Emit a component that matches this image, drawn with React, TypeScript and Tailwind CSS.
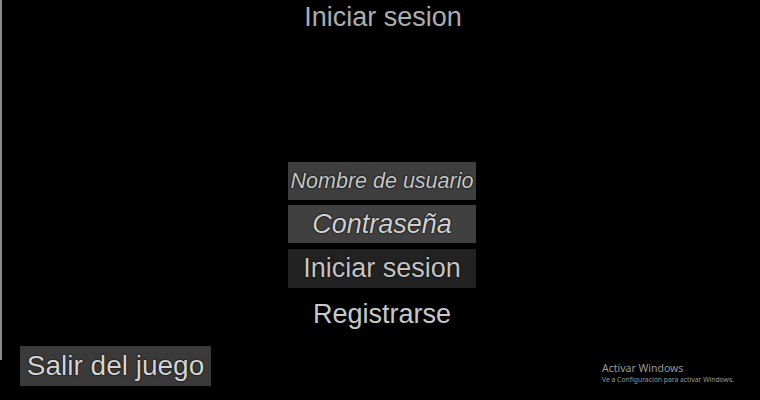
import React from 'react';

const outline = '[text-shadow:0_0_1px_#000,0_0_2px_#000]';

export default function App() {
  return (
    <div
      className="relative flex h-[400px] w-[760px] flex-col overflow-hidden bg-black"
      style={{ fontFamily: '"Liberation Sans", Arial, sans-serif' }}
    >
      <div className="absolute left-0 top-0 h-[360px] w-[2px] bg-[#8a8a8a]" />

      <h1 className="pt-[1px] text-center text-[27px] leading-[32px] text-[#adadad] pl-[6px]">
        Iniciar sesion
      </h1>

      <div className="mt-[129px] flex flex-col items-center gap-[5px] pl-[4px]">
        <div
          className={`flex h-[38px] w-[188px] items-center justify-center bg-[#3e3e3e] text-[21.5px] italic text-[#c8c8c8] ${outline}`}
        >
          Nombre de usuario
        </div>
        <div
          className={`flex h-[38px] w-[188px] items-center justify-center bg-[#404040] text-[27px] italic text-[#d0d0d0] ${outline}`}
        >
          Contraseña
        </div>
        <div
          className={`mt-[1px] flex h-[39px] w-[188px] items-center justify-center bg-[#222222] text-[27px] text-[#c4c4c4] ${outline}`}
        >
          Iniciar sesion
        </div>
        <div className={`flex h-[42px] items-center text-[27px] text-[#c8c8c8] ${outline}`}>
          Registrarse
        </div>
      </div>

      <div className="mt-auto mb-[14px] pl-[20px]">
        <div
          className={`flex h-[40px] w-[191px] items-center justify-center bg-[#3a3a3a] text-[28px] text-[#d4d4d4] ${outline}`}
        >
          Salir del juego
        </div>
      </div>

      <div
        className="absolute left-[602px] top-[362px] text-[#9a9a9a]"
        style={{ fontFamily: '"Noto Sans", "Open Sans", sans-serif' }}
      >
        <div className="text-[10.5px] leading-[13px]">Activar Windows</div>
        <div className="text-[6.8px] leading-[10px]">Ve a Configuración para activar Windows.</div>
      </div>
    </div>
  );
}
